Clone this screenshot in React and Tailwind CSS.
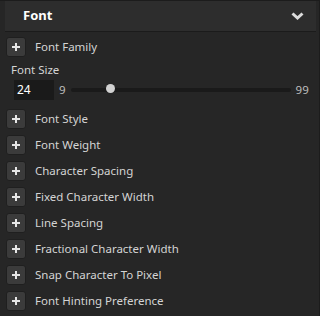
import React from "react";

const items = [
  "Font Style",
  "Font Weight",
  "Character Spacing",
  "Fixed Character Width",
  "Line Spacing",
  "Fractional Character Width",
  "Snap Character To Pixel",
  "Font Hinting Preference",
];

function PlusBtn() {
  return (
    <div className="w-[20px] h-[20px] rounded-[3px] bg-[#3b3b3b] border border-[#1f1f1f] flex items-center justify-center shrink-0">
      <svg width="10" height="10" viewBox="0 0 10 10">
        <path d="M5 1v8M1 5h8" stroke="#e6e6e6" strokeWidth="2" />
      </svg>
    </div>
  );
}

function Row({ label }) {
  return (
    <div className="flex items-center h-[20px] gap-[9px]">
      <PlusBtn />
      <span className="text-[11.5px] text-[#d4d4d4] leading-none">{label}</span>
    </div>
  );
}

export default function App() {
  return (
    <div
      className="w-[320px] h-[316px] bg-[#262626] border-t border-[#1c1c1c] border-r border-r-[#1c1c1c] pl-[5px] pr-[3px] overflow-hidden"
      style={{ fontFamily: '"Noto Sans", "Open Sans", sans-serif' }}
    >
      <div className="h-[31px] bg-[#2d2d2d] border-b border-[#1b1b1b] flex items-center justify-between pl-[18px] pr-[12px]">
        <span className="text-[13px] font-bold text-white">Font</span>
        <svg width="13" height="8" viewBox="0 0 13 8">
          <path d="M1.5 1.5l5 4.5l5-4.5" stroke="#dcdcdc" strokeWidth="3" fill="none" />
        </svg>
      </div>
      <div className="pl-[1px] pt-[5px] flex flex-col">
        <Row label="Font Family" />
        <div className="mt-[4px] pl-[5px] text-[11.5px] text-[#d4d4d4] leading-[18px]">Font Size</div>
        <div className="flex items-center mt-[1px] pl-[8px]">
          <div className="w-[40px] h-[20px] bg-[#1a1a1a] text-[12px] text-white flex items-center pl-[3px]">24</div>
          <span className="ml-[5px] text-[11.5px] text-[#bdbdbd]">9</span>
          <div className="relative ml-[5px] w-[220px] h-[4px] rounded-full bg-[#1a1a1a]">
            <div className="absolute left-[35px] top-[-4px] w-[9px] h-[9px] rounded-full bg-[#d2d2d2]" />
          </div>
          <span className="ml-[5px] text-[11.5px] text-[#bdbdbd]">99</span>
        </div>
        <div className="flex flex-col gap-[6px] mt-[9px]">
          {items.map((l) => (
            <Row key={l} label={l} />
          ))}
        </div>
      </div>
    </div>
  );
}
